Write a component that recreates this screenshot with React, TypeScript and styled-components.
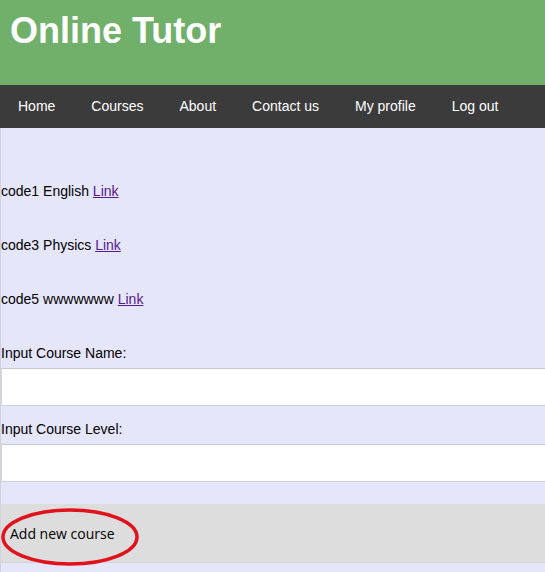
import React from 'react';
import styled, { createGlobalStyle } from 'styled-components';

const GlobalStyle = createGlobalStyle`
  html, body {
    margin: 0;
    padding: 0;
    background: #e6e6fa;
  }
  body {
    font-family: 'Liberation Sans', Arial, sans-serif;
    overflow: hidden;
  }
`;

const Page = styled.div`
  width: 545px;
  min-height: 572px;
  display: flex;
  flex-direction: column;
`;

const Header = styled.header`
  height: 85px;
  background-color: #71b06b;
  padding: 11px 0 0 10px;
  box-sizing: border-box;
`;

const Title = styled.h1`
  margin: 0;
  font-size: 36px;
  font-weight: bold;
  color: #ffffff;
  line-height: 40px;
`;

const Nav = styled.nav`
  height: 43px;
  background-color: #3b3b3b;
  display: flex;
  align-items: center;
`;

const NavLink = styled.a`
  color: #ffffff;
  font-size: 14px;
  text-decoration: none;
  padding: 0 18px;
  line-height: 43px;
  cursor: pointer;
`;

const Main = styled.main`
  flex: 1;
  background-color: #e6e6fa;
  border-left: 1px solid #d2d2de;
  padding-top: 17px;
  font-size: 14px;
  color: #000000;
`;

const CourseItem = styled.p`
  margin: 38px 0 0;
  line-height: 16px;
`;

const CourseLink = styled.a`
  color: #551a8b;
  text-decoration: underline;
  cursor: pointer;
`;

const Form = styled.form`
  margin-top: 38px;
  display: flex;
  flex-direction: column;
`;

const Label = styled.label<{ first?: boolean }>`
  line-height: 16px;
  margin-top: ${({ first }) => (first ? '0' : '15px')};
  margin-bottom: 7px;
`;

const Input = styled.input`
  height: 38px;
  width: 560px;
  box-sizing: border-box;
  border: none;
  border-top: 1px solid #c8c8d0;
  border-bottom: 1px solid #d0d0d8;
  border-left: 1px solid #d8d8e0;
  background: #ffffff;
  outline: none;
  font-size: 14px;
  padding: 0 8px;
`;

const ButtonRow = styled.div`
  position: relative;
  margin-top: 22px;
  margin-bottom: 6px;
  border-bottom: 1px solid #d4d4e0;
`;

const AddButton = styled.button`
  display: block;
  width: 100%;
  height: 58px;
  border: none;
  background-color: #dddddd;
  text-align: left;
  padding: 0 0 0 9px;
  font-family: 'Open Sans', 'Noto Sans', sans-serif;
  font-size: 14px;
  color: #000000;
  cursor: pointer;
`;

const Annotation = styled.svg`
  position: absolute;
  left: -1px;
  top: 2px;
  pointer-events: none;
`;

const navItems = ['Home', 'Courses', 'About', 'Contact us', 'My profile', 'Log out'];

const courses = [
  { code: 'code1', name: 'English' },
  { code: 'code3', name: 'Physics' },
  { code: 'code5', name: 'wwwwwww' },
];

const App: React.FC = () => {
  return (
    <>
      <GlobalStyle />
      <Page>
        <Header>
          <Title>Online Tutor</Title>
        </Header>
        <Nav>
          {navItems.map((item) => (
            <NavLink key={item}>{item}</NavLink>
          ))}
        </Nav>
        <Main>
          {courses.map((c) => (
            <CourseItem key={c.code}>
              {c.code} {c.name} <CourseLink>Link</CourseLink>
            </CourseItem>
          ))}
          <Form onSubmit={(e) => e.preventDefault()}>
            <Label first>Input Course Name:</Label>
            <Input type="text" />
            <Label>Input Course Level:</Label>
            <Input type="text" />
            <ButtonRow>
              <AddButton type="button">Add new course</AddButton>
              <Annotation width="144" height="62" viewBox="0 0 144 62">
                <ellipse cx="70" cy="31" rx="67" ry="27" fill="none" stroke="#e0121b" strokeWidth="3.5" />
              </Annotation>
            </ButtonRow>
          </Form>
        </Main>
      </Page>
    </>
  );
};

export default App;
